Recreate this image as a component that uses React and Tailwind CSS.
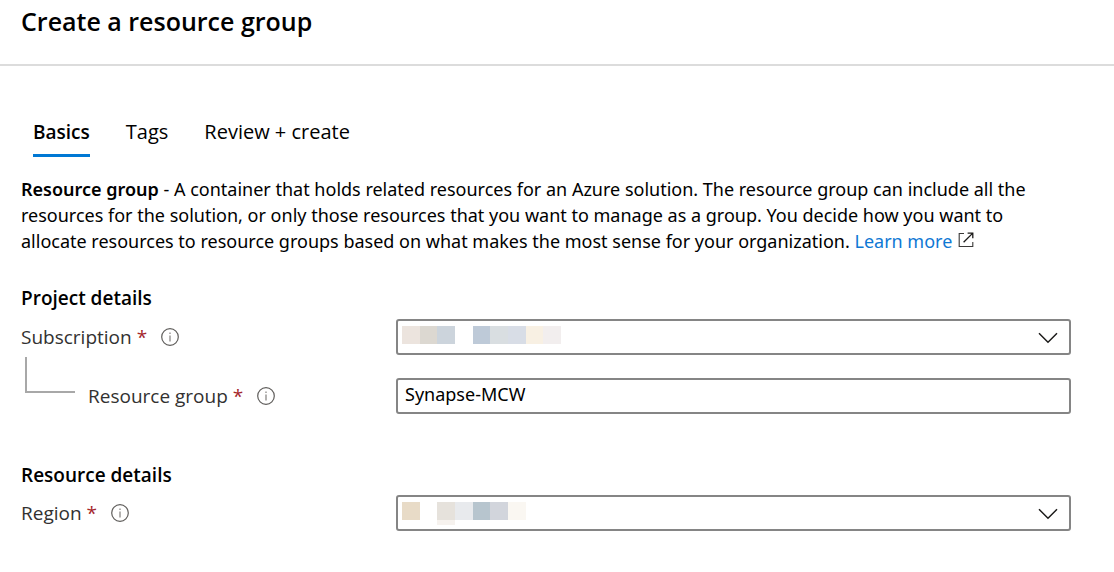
import { useState } from "react";

function InfoIcon() {
  return (
    <svg width="18" height="18" viewBox="0 0 18 18" fill="none" aria-hidden="true" className="shrink-0">
      <circle cx="9" cy="9" r="8.3" stroke="#605e5c" strokeWidth="1.2" />
      <path d="M9 7.5v6" stroke="#8a8886" strokeWidth="1.3" />
      <path d="M9 4.6v1.5" stroke="#8a8886" strokeWidth="1.3" />
    </svg>
  );
}

function ExternalIcon() {
  return (
    <svg width="16" height="16" viewBox="0 0 16 16" fill="none" aria-hidden="true" className="ml-1.5 inline-block align-baseline">
      <path d="M6 1.5H1.2v13h13.6V10" stroke="#3b3a39" strokeWidth="1.1" />
      <path d="M9.6 1.1h5.2v5.2M14.8 1.1 5.6 10.3" stroke="#1b1a19" strokeWidth="1.3" />
    </svg>
  );
}

function FieldLabel({ htmlFor, children }) {
  return (
    <div className="flex items-center gap-3.5 text-[19px] text-[#323130]">
      <label htmlFor={htmlFor}>
        {children} <span className="text-[#a4262c]">*</span>
      </label>
      <InfoIcon />
    </div>
  );
}

function MaskedSelect({ id, children }) {
  return (
    <div className="relative min-w-0 flex-1">
      <select id={id} className="block h-9 w-full appearance-none rounded-[3px] border-2 border-[#858585] bg-white outline-none focus:border-[#0078d4]">
        <option value=""></option>
      </select>
      <div className="pointer-events-none absolute top-[7px] left-1.5 flex items-start">{children}</div>
      <svg width="20" height="12" viewBox="0 0 20 12" fill="none" stroke="#1b1a19" strokeWidth="1.5" aria-hidden="true" className="pointer-events-none absolute top-[13px] right-[13px] h-3 w-5">
        <path d="m1 1.3 9 9 9-9" />
      </svg>
    </div>
  );
}

const tabs = ["Basics", "Tags", "Review + create"];

export default function App() {
  const [active, setActive] = useState("Basics");
  const [name, setName] = useState("Synapse-MCW");
  return (
    <div className="min-h-screen bg-white font-['Open_Sans','Noto_Sans',sans-serif] text-black">
      <header className="border-b-2 border-[#dcdcdc] px-[21px] pt-[3px] pb-[25px]">
        <h1 className="text-[25px] leading-9 font-semibold">Create a resource group</h1>
      </header>

      <main className="pr-[43px] pl-[21px]">
        <div role="tablist" className="flex gap-9 pt-[51px] pl-3">
          {tabs.map((tab) => (
            <button
              key={tab}
              type="button"
              role="tab"
              aria-selected={active === tab}
              onClick={() => setActive(tab)}
              className={
                active === tab
                  ? "h-10 border-b-3 border-[#0078d4] pb-1.5 text-[19px] font-semibold"
                  : "h-10 border-b-3 border-transparent pb-2 text-xl"
              }
            >
              {tab}
            </button>
          ))}
        </div>

        <p className="mt-[19px] font-['Noto_Sans','Open_Sans',sans-serif] text-lg leading-[26px]">
          <strong className="font-semibold">Resource group</strong> - A container that holds related resources for an
          Azure solution. The resource group can include all the resources for the solution, or only those resources
          that you want to manage as a group. You decide how you want to allocate resources to resource groups based on
          what makes the most sense for your organization.{" "}
          <a href="#learn-more" className="whitespace-nowrap text-[#0f78d4]">
            Learn more
            <ExternalIcon />
          </a>
        </p>

        <section className="mt-[29px]">
          <h2 className="text-[19px] leading-[30px] font-semibold">Project details</h2>
          <div className="mt-1.5 flex">
            <div className="flex h-9 w-[375px] items-center">
              <FieldLabel htmlFor="subscription">Subscription</FieldLabel>
            </div>
            <MaskedSelect id="subscription">
              <span className="h-[18px] w-[18px] bg-[#ece4de]" />
              <span className="h-[18px] w-[17px] bg-[#dcd8d1]" />
              <span className="mr-[18px] h-[18px] w-[18px] bg-[#ccd4dc]" />
              <span className="h-[18px] w-[17px] bg-[#becad8]" />
              <span className="h-[18px] w-[18px] bg-[#d9dee1]" />
              <span className="h-[18px] w-[18px] bg-[#d8dde6]" />
              <span className="h-[18px] w-[17px] bg-[#f8f0e3]" />
              <span className="h-[18px] w-[18px] bg-[#f2eeee]" />
            </MaskedSelect>
          </div>
          <div className="mt-[23px] flex">
            <div className="flex h-9 w-[375px] items-center gap-[13px] pl-1">
              <span className="-mt-[42px] h-9 w-[50px] border-b-2 border-l-2 border-[#a8a8a8]" />
              <FieldLabel htmlFor="resource-group">Resource group</FieldLabel>
            </div>
            <input
              id="resource-group"
              type="text"
              value={name}
              onChange={(e) => setName(e.target.value)}
              className="h-9 min-w-0 flex-1 rounded-[3px] border-2 border-[#858585] bg-white px-[7px] pb-1 font-['Noto_Sans','Open_Sans',sans-serif] text-lg outline-none focus:border-[#0078d4]"
            />
          </div>
        </section>

        <section className="mt-[46px] pb-10">
          <h2 className="text-[19px] leading-[30px] font-semibold">Resource details</h2>
          <div className="mt-[5px] flex">
            <div className="flex h-9 w-[375px] items-center">
              <FieldLabel htmlFor="region">Region</FieldLabel>
            </div>
            <MaskedSelect id="region">
              <span className="mr-[17px] h-[18px] w-[18px] bg-[#e8dbc7]" />
              <span className="h-[23px] w-[18px] border-b-5 border-[#f6f2ee] bg-[#e6e2dc]" />
              <span className="h-[18px] w-[18px] bg-[#e8eaed]" />
              <span className="h-[18px] w-[17px] bg-[#b7c5ce]" />
              <span className="h-[18px] w-[18px] bg-[#d2d5dc]" />
              <span className="h-[18px] w-[18px] bg-[#faf7f2]" />
            </MaskedSelect>
          </div>
        </section>
      </main>
    </div>
  );
}
